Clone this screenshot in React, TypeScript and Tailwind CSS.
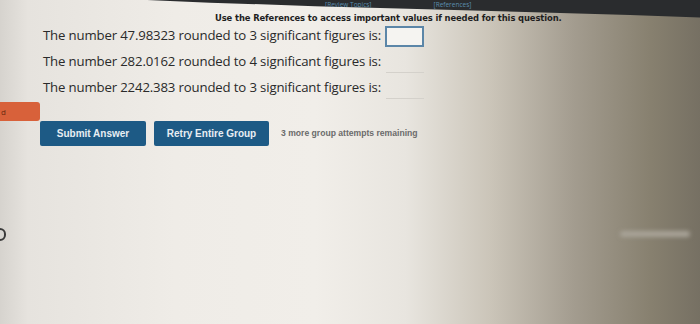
export default function App() {
  const rows = [
    { num: "47.98323", sig: 3, boxed: true },
    { num: "282.0162", sig: 4, boxed: false },
    { num: "2242.383", sig: 3, boxed: false },
  ];

  return (
    <main className="relative h-[324px] w-[700px] overflow-hidden bg-[linear-gradient(90deg,#d6d3ce_0%,#e6e3de_4%,#efece7_25%,#f1eee9_45%,#e8e5df_58%,#cbc5b9_70%,#a39c8f_82%,#87806f_93%,#767063_100%)] font-['Open_Sans',sans-serif]">
      {/* top bar, photographed at an angle */}
      <div className="h-[22px] w-full bg-[#2a2c2e] [clip-path:polygon(21%_0,100%_0,100%_80%,90%_68%,45%_28%,30%_12%)]">
        <div className="flex gap-[62px] pl-[325px] pt-px text-[6.5px] leading-[7px] text-[#5a8cad]">
          <span>[Review Topics]</span>
          <span>[References]</span>
        </div>
      </div>

      <div className="-mt-[10px] pl-[215px] font-['DejaVu_Sans',sans-serif] text-[8.4px] font-bold tracking-[-0.1px] text-[#1e1e1e]">
        Use the References to access important values if needed for this question.
      </div>

      <div className="flex flex-col gap-[3px] pl-[43px] text-[13.2px] text-[#2a2a2a]">
        {rows.map((r) => (
          <div key={r.num} className="flex h-[23px] items-center">
            <span className="tracking-[-0.15px]">
              The number {r.num} rounded to {r.sig} significant figures is:
            </span>
            {r.boxed ? (
              <div className="ml-[4px] h-[21px] w-[39px] border-2 border-[#5b86a8] bg-[#f5f4f1]" />
            ) : (
              <div className="ml-[5px] mt-[20px] h-px w-[38px] bg-[#d4d1cb]" />
            )}
          </div>
        ))}
      </div>

      <div className="mt-[2px] h-[19px] w-[40px] rounded-r-[3px] bg-[#d8613a] pl-[1px] text-[8px] leading-[19px] text-[#6a2a10]">
        d
      </div>

      <div className="flex items-center gap-[8px] pl-[40px] font-['Liberation_Sans',sans-serif]">
        <button className="h-[25px] w-[106px] rounded-[2px] bg-[#1d5a85] text-[10px] font-bold text-[#e8eef3]">
          Submit Answer
        </button>
        <button className="h-[25px] w-[115px] rounded-[2px] bg-[#1d5a85] text-[10px] font-bold text-[#e8eef3]">
          Retry Entire Group
        </button>
        <span className="ml-[4px] text-[8.6px] font-bold text-[#6b6b6b]">
          3 more group attempts remaining
        </span>
      </div>

      <div className="mt-[82px] flex items-center justify-between">
        <div className="-ml-[6px] h-[13px] w-[12px] rounded-full border-2 border-[#3a3a3a] bg-[#d8d6d2]" />
        <div className="mr-[10px] h-[6px] w-[70px] rounded-full bg-[#a8a398] blur-[2px]" />
      </div>
    </main>
  );
}
